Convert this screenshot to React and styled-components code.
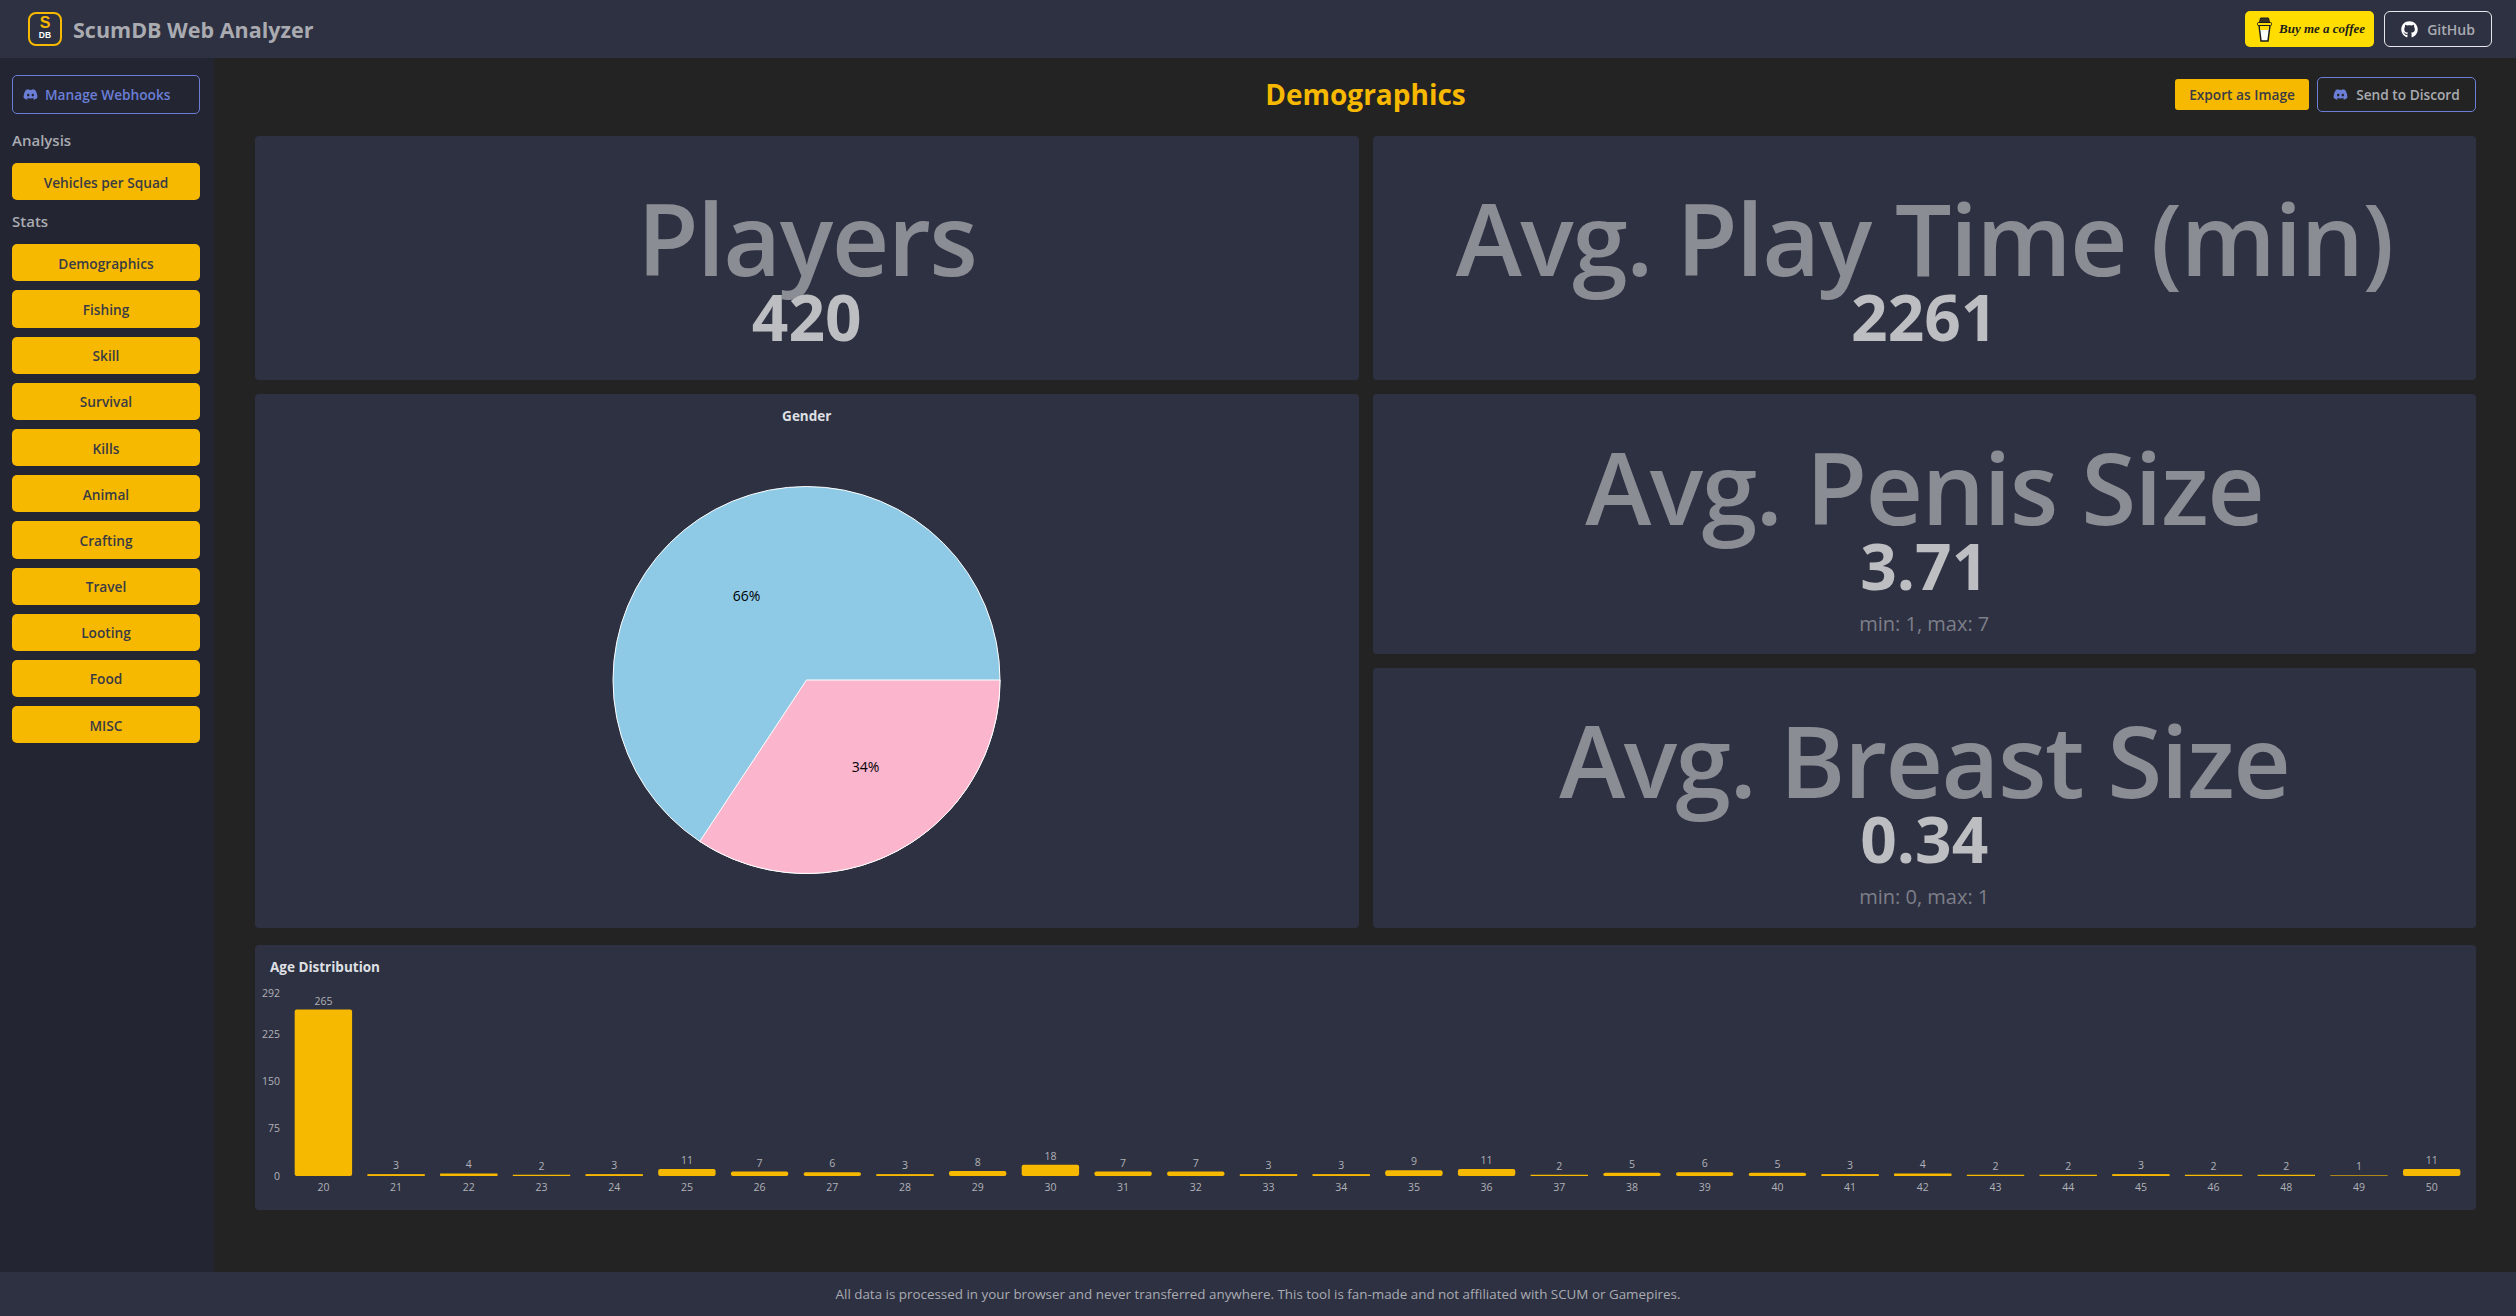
import React from "react";
import styled, { createGlobalStyle } from "styled-components";
import { FaDiscord, FaGithub } from "react-icons/fa";

const GOLD = "#f7b900";
const CARD = "#2e3142";

const stats = ["Demographics", "Fishing", "Skill", "Survival", "Kills", "Animal", "Crafting", "Travel", "Looting", "Food", "MISC"];

const ages = [
  [20, 265], [21, 3], [22, 4], [23, 2], [24, 3], [25, 11], [26, 7], [27, 6], [28, 3], [29, 8],
  [30, 18], [31, 7], [32, 7], [33, 3], [34, 3], [35, 9], [36, 11], [37, 2], [38, 5], [39, 6],
  [40, 5], [41, 3], [42, 4], [43, 2], [44, 2], [45, 3], [46, 2], [48, 2], [49, 1], [50, 11],
];

const ticks = [[292, 10], [225, 51], [150, 98], [75, 145], [0, 193]];

const Global = createGlobalStyle`
  html, body {
    margin: 0;
    padding: 0;
    background: #232323;
    font-family: "Open Sans", "Noto Sans", sans-serif;
  }
`;

const Page = styled.div`
  display: flex;
  flex-direction: column;
  width: 2516px;
  height: 1316px;
  overflow: hidden;
`;

const Header = styled.header`
  display: flex;
  align-items: center;
  justify-content: space-between;
  height: 58px;
  padding: 0 24px 0 28px;
  background: ${CARD};
  flex: none;
`;

const Brand = styled.div`
  display: flex;
  align-items: center;
  gap: 11px;
  font-size: 21.5px;
  font-weight: 700;
  color: #a9abb1;
`;

const Logo = styled.div`
  display: flex;
  flex-direction: column;
  align-items: center;
  box-sizing: border-box;
  width: 34px;
  height: 34px;
  border: 2px solid ${GOLD};
  border-radius: 8px;
  font-family: "Liberation Sans", sans-serif;
  line-height: 1;

  b {
    color: ${GOLD};
    font-size: 16px;
    font-weight: 700;
    margin-top: 1px;
  }

  span {
    color: #fff;
    font-size: 8.5px;
    font-weight: 700;
    margin-top: 0;
  }
`;

const HeaderActions = styled.div`
  display: flex;
  gap: 10px;
`;

const Coffee = styled.div`
  display: flex;
  align-items: center;
  gap: 7px;
  box-sizing: border-box;
  width: 129px;
  height: 36px;
  padding-left: 12px;
  background: #ffdd00;
  border-radius: 5px;
  color: #1c1c1c;
  font-family: "Liberation Serif", serif;
  font-style: italic;
  font-weight: 700;
  font-size: 13px;
  white-space: nowrap;
`;

const GithubLink = styled.div`
  display: flex;
  align-items: center;
  justify-content: center;
  gap: 9px;
  box-sizing: border-box;
  width: 108px;
  height: 36px;
  border: 1px solid #e8e8ec;
  border-radius: 6px;
  color: #a9abb1;
  font-size: 14px;
  font-weight: 600;

  svg {
    color: #fff;
    font-size: 17px;
  }
`;

const Body = styled.div`
  display: flex;
  flex: 1;
  min-height: 0;
`;

const Sidebar = styled.aside`
  display: flex;
  flex-direction: column;
  box-sizing: border-box;
  width: 214px;
  padding: 17px 14px 0 12px;
  background: #232533;
  flex: none;
`;

const WebhookButton = styled.div`
  display: flex;
  align-items: center;
  gap: 7px;
  box-sizing: border-box;
  height: 38.5px;
  padding-left: 10px;
  border: 1px solid #6b7fd7;
  border-radius: 5px;
  color: #6b7fd7;
  font-size: 13.7px;
  font-weight: 600;

  svg {
    font-size: 15px;
  }
`;

const SectionLabel = styled.div`
  display: flex;
  align-items: center;
  box-sizing: border-box;
  height: ${(p) => p.$h}px;
  padding: ${(p) => p.$pad};
  color: #a9abb1;
  font-size: 15px;
  font-weight: 600;
`;

const NavList = styled.div`
  display: flex;
  flex-direction: column;
  gap: 9px;
`;

const NavButton = styled.div`
  display: flex;
  align-items: center;
  justify-content: center;
  box-sizing: border-box;
  height: 37.2px;
  padding-top: 1px;
  background: ${GOLD};
  border-radius: 5px;
  color: #3a3b45;
  font-size: 13.7px;
  font-weight: 600;
`;

const Main = styled.main`
  display: flex;
  flex-direction: column;
  flex: 1;
  min-width: 0;
  padding: 0 40px 0 41px;
`;

const TitleRow = styled.div`
  position: relative;
  display: flex;
  align-items: center;
  justify-content: flex-end;
  gap: 8px;
  box-sizing: border-box;
  height: 78px;
  padding-bottom: 6px;
  flex: none;
`;

const PageTitle = styled.h1`
  position: absolute;
  left: 0;
  right: 0;
  margin: 0;
  text-align: center;
  color: ${GOLD};
  font-size: 28px;
  font-weight: 700;
`;

const ExportButton = styled.div`
  position: relative;
  display: flex;
  align-items: center;
  justify-content: center;
  width: 134px;
  height: 31px;
  background: ${GOLD};
  border-radius: 3px;
  color: #3a3b45;
  font-size: 13.7px;
  font-weight: 600;
`;

const DiscordButton = styled.div`
  position: relative;
  display: flex;
  align-items: center;
  justify-content: center;
  gap: 8px;
  box-sizing: border-box;
  width: 159px;
  height: 35px;
  border: 1px solid #6b7fd7;
  border-radius: 5px;
  color: #a9abb1;
  font-size: 13.7px;
  font-weight: 600;

  svg {
    color: #6b7fd7;
    font-size: 15px;
  }
`;

const Grid = styled.div`
  display: grid;
  grid-template-columns: 1fr 1fr;
  grid-template-rows: 244px 533.5px;
  gap: 14px;
  flex: none;
`;

const Card = styled.section`
  background: ${CARD};
  border-radius: 4px;
`;

const StatCard = styled(Card)`
  display: flex;
  flex-direction: column;
  align-items: center;
  justify-content: center;
  box-sizing: border-box;
  padding-top: ${(p) => (p.$hasNote ? 25 : 19)}px;
  min-height: 0;
  flex: 1;
`;

const StatTitle = styled.div`
  color: #8b8d95;
  font-size: 100px;
  font-weight: 600;
  letter-spacing: -1.6px;
  line-height: 100px;
`;

const StatValue = styled.div`
  margin-top: -2px;
  color: #bdbec1;
  font-size: 64px;
  font-weight: 700;
  line-height: 64px;
`;

const StatNote = styled.div`
  margin-top: 12px;
  color: #7d7f89;
  font-size: 20px;
  line-height: 28px;
`;

const Stack = styled.div`
  display: flex;
  flex-direction: column;
  gap: 13.5px;
  min-height: 0;
`;

const PieCard = styled(Card)`
  display: flex;
  flex-direction: column;
  align-items: center;
`;

const ChartTitle = styled.div`
  color: #dfe0e4;
  font-size: 13.5px;
  font-weight: 700;
  line-height: 44px;
`;

const AgeCard = styled(Card)`
  height: 265px;
  margin-top: 17.5px;
  flex: none;

  ${ChartTitle} {
    padding-left: 15px;
    line-height: 44px;
    height: 38px;
  }

  svg {
    display: block;
  }
`;

const Footer = styled.footer`
  display: flex;
  align-items: center;
  justify-content: center;
  height: 44px;
  background: ${CARD};
  color: #a9abb1;
  font-size: 13.4px;
  flex: none;
`;

// pink slice runs clockwise from 3 o'clock
function GenderPie() {
  const r = 193.5;
  const share = 0.343;
  const a = share * 2 * Math.PI;
  const x = r * Math.cos(a);
  const y = r * Math.sin(a);
  return (
    <svg width="400" height="484" viewBox="-199.5 -242 400 484">
      <circle r={r} fill="#8ecae6" stroke="#fff" strokeWidth="1" />
      <path d={`M0 0 L${r} 0 A${r} ${r} 0 0 1 ${x} ${y} Z`} fill="#fbb6ce" stroke="#fff" strokeWidth="1" />
      <g fontFamily="Open Sans, sans-serif" fontSize="14" fontWeight="500" fill="#000" textAnchor="middle">
        <text x="-60" y="-79">66%</text>
        <text x="59" y="92">34%</text>
      </g>
    </svg>
  );
}

function AgeChart() {
  const base = 193;
  const pitch = 72.7;
  const barW = 57.4;
  return (
    <svg width="2221" height="227" viewBox="0 0 2221 227">
      <g fontFamily="Open Sans, sans-serif" fontSize="10.5" fill="#b0b2b7">
        {ticks.map(([t, y]) => (
          <text key={t} x="25" y={y + 4} textAnchor="end">{t}</text>
        ))}
        {ages.map(([age, n], i) => {
          const x = 39.7 + i * pitch;
          const h = n * 0.628;
          return (
            <g key={age} textAnchor="middle">
              <rect x={x} y={base - h} width={barW} height={h} rx={h > 3 ? 2 : 0} fill={GOLD} />
              <text x={x + barW / 2} y={base - h - 5}>{n}</text>
              <text x={x + barW / 2} y={base + 15}>{age}</text>
            </g>
          );
        })}
      </g>
    </svg>
  );
}

function CoffeeCup() {
  return (
    <svg width="15" height="25" viewBox="0 0 15 25">
      <path d="M2 8 L4 24 H11 L13 8 Z" fill="#fff" stroke="#1c1c1c" strokeWidth="1.5" />
      <path d="M2.8 8.5 L3.5 13 H11.5 L12.2 8.5 Z" fill="#ffdd00" />
      <rect x="0.5" y="5.5" width="14" height="3" rx="1" fill="#ffdd00" stroke="#1c1c1c" strokeWidth="1" />
      <path d="M2.5 5.5 L3.5 1 H11.5 L12.5 5.5 Z" fill="#3a3520" stroke="#1c1c1c" strokeWidth="1" />
    </svg>
  );
}

function Stat({ title, value, note }) {
  return (
    <StatCard $hasNote={!!note}>
      <StatTitle>{title}</StatTitle>
      <StatValue>{value}</StatValue>
      {note && <StatNote>{note}</StatNote>}
    </StatCard>
  );
}

export default function App() {
  return (
    <Page>
      <Global />
      <Header>
        <Brand>
          <Logo>
            <b>S</b>
            <span>DB</span>
          </Logo>
          ScumDB Web Analyzer
        </Brand>
        <HeaderActions>
          <Coffee>
            <CoffeeCup />
            Buy me a coffee
          </Coffee>
          <GithubLink>
            <FaGithub />
            GitHub
          </GithubLink>
        </HeaderActions>
      </Header>
      <Body>
        <Sidebar>
          <WebhookButton>
            <FaDiscord />
            Manage Webhooks
          </WebhookButton>
          <SectionLabel $h={49.5} $pad="4px 0 0">Analysis</SectionLabel>
          <NavButton>Vehicles per Squad</NavButton>
          <SectionLabel $h={44} $pad="0 0 2px">Stats</SectionLabel>
          <NavList>
            {stats.map((s) => (
              <NavButton key={s}>{s}</NavButton>
            ))}
          </NavList>
        </Sidebar>
        <Main>
          <TitleRow>
            <PageTitle>Demographics</PageTitle>
            <ExportButton>Export as Image</ExportButton>
            <DiscordButton>
              <FaDiscord />
              Send to Discord
            </DiscordButton>
          </TitleRow>
          <Grid>
            <Stat title="Players" value="420" />
            <Stat title="Avg. Play Time (min)" value="2261" />
            <PieCard>
              <ChartTitle>Gender</ChartTitle>
              <GenderPie />
            </PieCard>
            <Stack>
              <Stat title="Avg. Penis Size" value="3.71" note="min: 1, max: 7" />
              <Stat title="Avg. Breast Size" value="0.34" note="min: 0, max: 1" />
            </Stack>
          </Grid>
          <AgeCard>
            <ChartTitle>Age Distribution</ChartTitle>
            <AgeChart />
          </AgeCard>
        </Main>
      </Body>
      <Footer>All data is processed in your browser and never transferred anywhere. This tool is fan-made and not affiliated with SCUM or Gamepires.</Footer>
    </Page>
  );
}
